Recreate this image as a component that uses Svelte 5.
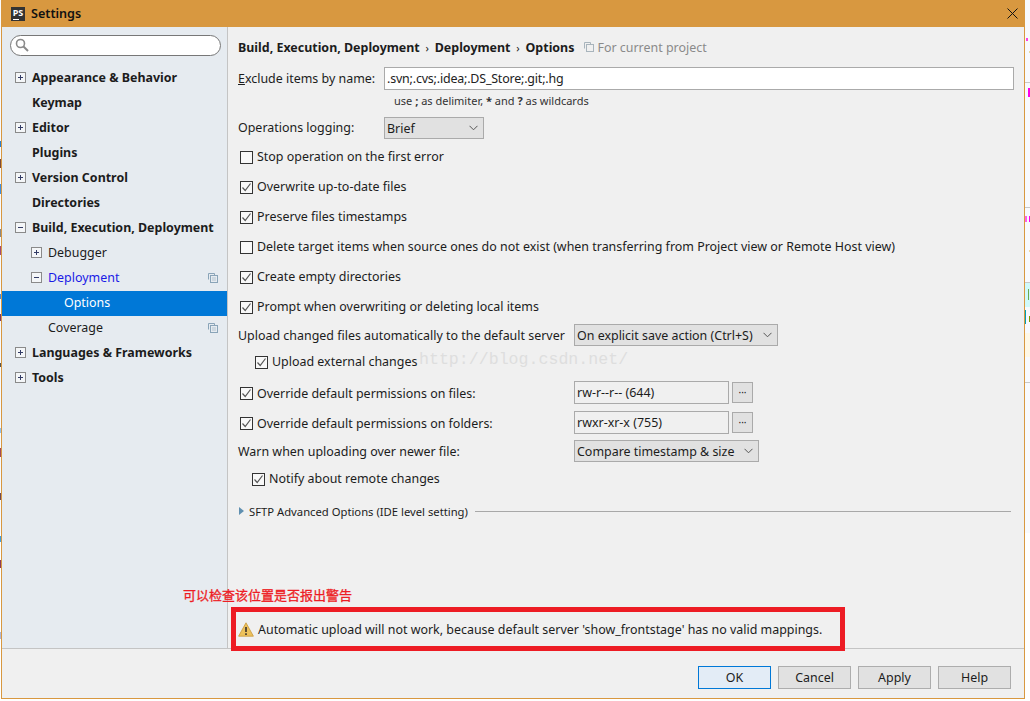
<script lang="ts">
  const tree = [
    { label: 'Appearance & Behavior', bold: true, toggle: 'plus' },
    { label: 'Keymap', bold: true },
    { label: 'Editor', bold: true, toggle: 'plus' },
    { label: 'Plugins', bold: true },
    { label: 'Version Control', bold: true, toggle: 'plus' },
    { label: 'Directories', bold: true },
    { label: 'Build, Execution, Deployment', bold: true, toggle: 'minus' },
    { label: 'Debugger', level: 1, toggle: 'plus' },
    { label: 'Deployment', level: 1, toggle: 'minus', link: true, project: true },
    { label: 'Options', level: 2, selected: true },
    { label: 'Coverage', level: 1, project: true },
    { label: 'Languages & Frameworks', bold: true, toggle: 'plus' },
    { label: 'Tools', bold: true, toggle: 'plus' }
  ];

  const checks = [
    { label: 'Stop operation on the first error', on: false },
    { label: 'Overwrite up-to-date files', on: true },
    { label: 'Preserve files timestamps', on: true },
    { label: 'Delete target items when source ones do not exist (when transferring from Project view or Remote Host view)', on: false },
    { label: 'Create empty directories', on: true },
    { label: 'Prompt when overwriting or deleting local items', on: true }
  ];

  // bits of the desktop showing past the window edges: [x, y, w, h, colour]
  const specks = [
    [0, 141, 1, 6, '#2a7fd0'], [0, 159, 1, 9, '#7a4a3a'], [0, 184, 1, 10, '#3f8fe0'],
    [0, 229, 1, 8, '#888'], [0, 246, 1, 9, '#a04a7a'], [0, 294, 1, 5, '#3f8fe0'],
    [0, 314, 1, 7, '#7a3a6a'], [0, 363, 1, 4, '#555'], [0, 428, 1, 5, '#8fc0f0'],
    [0, 448, 1, 9, '#a04a5a'], [0, 493, 1, 7, '#6a4a5a'], [0, 536, 1, 6, '#3f9fe0'],
    [0, 560, 1, 8, '#8a3a5a'], [0, 632, 1, 7, '#b0b8d8'],
    [1026, 38, 2, 3, '#ff40e0'], [1029, 51, 1, 2, '#e8d8a0'],
    [1025, 82, 5, 1, '#c8c8c8'], [1028, 88, 2, 9, '#ff00e8'],
    [1025, 207, 5, 1, '#c8c8c8'], [1025, 216, 2, 6, '#ff60e8'], [1029, 216, 1, 6, '#ff00e8'],
    [1029, 250, 1, 2, '#f0d8a0'], [1025, 282, 5, 1, '#c8c8c8'],
    [1025, 283, 5, 24, '#d0fafa'], [1028, 289, 1, 11, '#6aa84f'],
    [1025, 310, 1, 14, '#00a0b0'], [1029, 316, 1, 6, '#7a9a00'],
    [1025, 333, 5, 24, '#fff8e6'], [1025, 382, 5, 1, '#c8c8c8']
  ];
</script>

{#snippet checkbox(on)}
  <span class="box">
    {#if on}
      <svg width="11" height="11" viewBox="0 0 11 11"><path d="M1.5 5.5 L4.2 8.5 L9.5 1.5" fill="none" stroke="#555" stroke-width="1.2" /></svg>
    {/if}
  </span>
{/snippet}

{#snippet chevron()}
  <svg class="chev" width="9" height="6" viewBox="0 0 9 6"><path d="M0.5 0.8 L4.5 4.8 L8.5 0.8" fill="none" stroke="#555" stroke-width="1" /></svg>
{/snippet}

{#snippet copyIcon()}
  <svg class="copy" width="10" height="10" viewBox="0 0 10 10">
    <path d="M0.5 6.5 V0.5 H6.5 V2.5" fill="none" stroke="#8aa4b8" />
    <rect x="2.5" y="2.5" width="7" height="7" fill="none" stroke="#8aa4b8" />
    <path d="M4 5 H8 M4 7 H8" stroke="#b4c4d0" />
  </svg>
{/snippet}

<div class="page">
  {#each specks as [x, y, w, h, colour]}
    <i class="speck" style="left:{x}px;top:{y}px;width:{w}px;height:{h}px;background:{colour}"></i>
  {/each}

  <div class="window">
    <header class="titlebar">
      <span class="logo">PS</span>
      <span class="title">Settings</span>
      <svg class="close" width="11" height="11" viewBox="0 0 11 11"><path d="M0.5 0.5 L10.5 10.5 M10.5 0.5 L0.5 10.5" stroke="#111" stroke-width="1" /></svg>
    </header>

    <div class="body">
      <aside class="sidebar">
        <div class="search">
          <svg width="14" height="14" viewBox="0 0 14 14">
            <circle cx="5.5" cy="5.5" r="4" fill="none" stroke="#8a8a8a" stroke-width="1.6" />
            <path d="M8.5 8.5 L13 13" stroke="#8a8a8a" stroke-width="2" />
          </svg>
        </div>
        <ul class="tree">
          {#each tree as item}
            <li class="node level{item.level ?? 0}" class:selected={item.selected}>
              {#if item.toggle}
                <span class="toggle">
                  <svg width="9" height="9" viewBox="0 0 9 9">
                    <path d="M2 4.5 H7" stroke="#333c66" />
                    {#if item.toggle === 'plus'}<path d="M4.5 2 V7" stroke="#333c66" />{/if}
                  </svg>
                </span>
              {/if}
              <span class="label" class:bold={item.bold} class:link={item.link}>{item.label}</span>
              {#if item.project}{@render copyIcon()}{/if}
            </li>
          {/each}
        </ul>
      </aside>

      <main class="main">
        <div class="crumbs">
          <b>Build, Execution, Deployment</b>
          <span class="sep">›</span>
          <b>Deployment</b>
          <span class="sep">›</span>
          <b>Options</b>
          <svg class="scope" width="10" height="10" viewBox="0 0 10 10">
            <path d="M0.5 6.5 V0.5 H6.5 V2.5" fill="none" stroke="#a8b4bc" />
            <rect x="2.5" y="2.5" width="7" height="7" fill="none" stroke="#a8b4bc" />
          </svg>
          <span class="scope-text">For current project</span>
        </div>

        <div class="row exclude">
          <span class="exclude-label"><u>E</u>xclude items by name:</span>
          <span class="input wide">.svn;.cvs;.idea;.DS_Store;.git;.hg</span>
        </div>
        <div class="hint">use <b>;</b> as delimiter, <b>*</b> and <b>?</b> as wildcards</div>
        <div class="row ops">
          <span class="exclude-label">Operations logging:</span>
          <span class="select brief">Brief{@render chevron()}</span>
        </div>

        {#each checks as c}
          <div class="check">{@render checkbox(c.on)}<span class="check-text">{c.label}</span></div>
        {/each}

        <div class="row upload">
          <span class="field-label">Upload changed files automatically to the default server</span>
          <span class="select">On explicit save action (Ctrl+S){@render chevron()}</span>
        </div>
        <div class="check ext">{@render checkbox(true)}<span class="check-text">Upload external changes</span></div>
        <div class="row perm first">
          <span class="perm-label">{@render checkbox(true)}<span>Override default permissions on files:</span></span>
          <span class="input perm-input">rw-r--r-- (644)</span>
          <span class="dots">···</span>
        </div>
        <div class="row perm">
          <span class="perm-label">{@render checkbox(true)}<span>Override default permissions on folders:</span></span>
          <span class="input perm-input">rwxr-xr-x (755)</span>
          <span class="dots">···</span>
        </div>
        <div class="row warn-row">
          <span class="field-label">Warn when uploading over newer file:</span>
          <span class="select">Compare timestamp &amp; size{@render chevron()}</span>
        </div>
        <div class="check notify">{@render checkbox(true)}<span class="check-text">Notify about remote changes</span></div>

        <div class="sftp">
          <svg width="5" height="8" viewBox="0 0 5 8"><path d="M0 0 L5 4 L0 8 Z" fill="#5f8fb0" /></svg>
          <span>SFTP Advanced Options (IDE level setting)</span>
          <i></i>
        </div>

        <div class="warning">
          <svg width="16" height="15" viewBox="0 0 16 15">
            <path d="M8 0.8 L15.4 14.2 H0.6 Z" fill="#edc25c" stroke="#c9983a" stroke-width="0.8" stroke-linejoin="round" />
            <path d="M8 5 V10 M8 11.2 V13" stroke="#4a4030" stroke-width="1.8" />
          </svg>
          <span>Automatic upload will not work, because default server 'show_frontstage' has no valid mappings.</span>
        </div>
      </main>
    </div>

    <footer class="footer">
      <button class="btn primary">OK</button>
      <button class="btn">Cancel</button>
      <button class="btn">Apply</button>
      <button class="btn">Help</button>
    </footer>
  </div>

  <!-- annotations drawn over the screenshot -->
  <div class="watermark">http://blog.csdn.net/</div>
  <div class="note">可以检查该位置是否报出警告</div>
  <div class="redbox"></div>
</div>

<style>
  :global(body) {
    margin: 0;
    background: #fff;
  }

  .page {
    position: relative;
    width: 1030px;
    height: 701px;
    overflow: hidden;
    background: linear-gradient(#f8fafe 533px, #fff 533px);
    font-family: "Noto Sans", "Noto Sans CJK SC", sans-serif;
    font-size: 12.45px;
    color: #1c1c1c;
  }

  .speck {
    position: absolute;
  }

  .window {
    position: absolute;
    left: 1px;
    top: 0;
    width: 1024px;
    height: 699px;
    box-sizing: border-box;
    border: 1px solid #d89840;
    border-top: 0;
    background: #f0f0f0;
    display: flex;
    flex-direction: column;
  }

  .titlebar {
    height: 27px;
    flex: none;
    margin: 0 -1px;
    background: #d89840;
    display: flex;
    align-items: center;
    padding-left: 10px;
    color: #111;
  }

  .logo {
    position: relative;
    width: 14px;
    height: 14px;
    background: #333;
    color: #fff;
    font-size: 9px;
    font-weight: 700;
    line-height: 11px;
    text-align: center;
    margin-right: 6px;
  }

  .logo::after {
    content: "";
    position: absolute;
    left: 2px;
    bottom: 1px;
    width: 6px;
    height: 1px;
    background: #fff;
  }

  .title {
    font-weight: 600;
    font-size: 12.6px;
    margin-top: -1px;
  }

  .close {
    margin-left: auto;
    margin-right: 7px;
  }

  .body {
    height: 621px;
    flex: none;
    display: flex;
    border-bottom: 1px solid #c4c4c4;
  }

  .sidebar {
    width: 226px;
    flex: none;
    box-sizing: border-box;
    background: #e6ebf0;
    border-right: 1px solid #c4c4c4;
    padding-top: 8px;
  }

  .search {
    width: 211px;
    height: 21px;
    box-sizing: border-box;
    margin-left: 8px;
    background: #fff;
    border: 1px solid #777;
    border-radius: 11px;
    padding: 2px 0 0 4px;
    display: flex;
  }

  .tree {
    list-style: none;
    margin: 10px 0 0;
    padding: 0;
  }

  .node {
    position: relative;
    height: 25px;
    display: flex;
    align-items: center;
    padding-left: 30px;
  }

  .node.level1 {
    padding-left: 46px;
  }

  .node.level2 {
    padding-left: 62px;
  }

  .node.selected {
    background: #0078d7;
    color: #fff;
  }

  .toggle {
    position: absolute;
    left: 13px;
    width: 9px;
    height: 9px;
    margin-top: -2px;
    border: 1px solid #8a8a8a;
    background: #f4f6f8;
    box-sizing: content-box;
    display: flex;
  }

  .level1 .toggle {
    left: 29px;
  }

  .label {
    margin-top: -3px;
  }

  .label.bold {
    font-weight: 700;
  }

  .label.link {
    color: #1a1ae6;
  }

  .copy {
    position: absolute;
    right: 9px;
    margin-top: -2px;
  }

  .main {
    flex: 1;
    min-width: 0;
    padding: 7px 0 0 10px;
    display: flex;
    flex-direction: column;
  }

  .crumbs {
    height: 26px;
    flex: none;
    margin-bottom: 6px;
    display: flex;
    align-items: center;
    white-space: nowrap;
  }

  .crumbs b {
    font-weight: 700;
  }

  .sep {
    width: 15px;
    text-align: center;
    font-size: 11px;
  }

  .scope {
    margin-left: 10px;
    margin-right: 3px;
  }

  .scope-text {
    color: #8a8a8a;
  }

  .row {
    display: flex;
    align-items: center;
    flex: none;
    white-space: nowrap;
  }

  .exclude {
    height: 24px;
  }

  .exclude-label {
    width: 146px;
    flex: none;
  }

  .field-label {
    width: 336px;
    flex: none;
  }

  .input,
  .select {
    box-sizing: border-box;
    border: 1px solid #aaa;
    display: flex;
    align-items: center;
    padding-left: 2px;
  }

  .input {
    height: 23px;
    background: #fff;
  }

  .input.wide {
    width: 630px;
    color: #222;
    letter-spacing: -0.18px;
  }

  .select {
    height: 22px;
    background: #e1e1e1;
    justify-content: space-between;
    padding-right: 5px;
    gap: 10px;
  }

  .select.brief {
    width: 100px;
    margin-top: 1px;
  }

  .chev {
    flex: none;
  }

  .hint {
    height: 23px;
    flex: none;
    line-height: 22px;
    padding-left: 156px;
    font-size: 11px;
    color: #333;
  }

  .ops {
    height: 29px;
  }

  .check {
    height: 30px;
    flex: none;
    display: flex;
    align-items: center;
    padding-left: 2px;
    white-space: nowrap;
  }

  .check-text {
    margin-top: -2px;
  }

  .box {
    width: 13px;
    height: 13px;
    flex: none;
    box-sizing: border-box;
    border: 1px solid #333;
    background: #f8f8f8;
    margin-right: 4px;
    display: flex;
    align-items: center;
    justify-content: center;
  }

  .upload {
    height: 26px;
  }

  .check.ext {
    height: 29px;
    padding-left: 17px;
  }

  .perm {
    height: 28px;
  }

  .perm.first {
    height: 32px;
  }

  .perm-label {
    width: 336px;
    flex: none;
    box-sizing: border-box;
    padding-left: 2px;
    display: flex;
    align-items: center;
  }

  .perm-input {
    width: 155px;
    margin-bottom: 1px;
    background: #f0f0f0;
    padding-left: 2px;
  }

  .dots {
    width: 21px;
    height: 21px;
    box-sizing: border-box;
    margin-left: 3px;
    margin-bottom: 1px;
    border: 1px solid #aaa;
    background: #e1e1e1;
    font-size: 10px;
    line-height: 18px;
    text-align: center;
  }

  .warn-row {
    height: 28px;
  }

  .check.notify {
    height: 28px;
    padding-left: 14px;
  }

  .sftp {
    height: 26px;
    flex: none;
    margin-top: 5px;
    display: flex;
    align-items: center;
    font-size: 11.25px;
    white-space: nowrap;
    padding-right: 13px;
    gap: 5px;
  }

  .sftp svg {
    margin-left: 1px;
  }

  .sftp i {
    flex: 1;
    height: 1px;
    margin-left: 2px;
    background: #a8a8a8;
  }

  .warning {
    margin-top: auto;
    height: 38px;
    flex: none;
    display: flex;
    align-items: center;
    gap: 4px;
    white-space: nowrap;
  }

  .footer {
    flex: 1;
    display: flex;
    justify-content: flex-end;
    gap: 7px;
    padding: 17px 13px 0 0;
  }

  .btn {
    width: 73px;
    height: 23px;
    box-sizing: border-box;
    border: 1px solid #adadad;
    background: #e1e1e1;
    font: inherit;
    color: #1c1c1c;
    padding: 0;
  }

  .btn.primary {
    background: #e3ecf6;
    border-color: #0078d7;
  }

  .watermark {
    position: absolute;
    left: 419px;
    top: 350px;
    font-family: "Liberation Mono", monospace;
    font-size: 16.6px;
    line-height: 20px;
    color: #dedede;
    white-space: nowrap;
  }

  .note {
    position: absolute;
    left: 183px;
    top: 586px;
    font-size: 13px;
    line-height: 18px;
    color: #ed1c24;
    -webkit-text-stroke: 0.3px #ed1c24;
    white-space: nowrap;
  }

  .redbox {
    position: absolute;
    left: 231px;
    top: 607px;
    width: 614px;
    height: 44px;
    box-sizing: border-box;
    border: 5px solid #ed1c24;
  }
</style>
